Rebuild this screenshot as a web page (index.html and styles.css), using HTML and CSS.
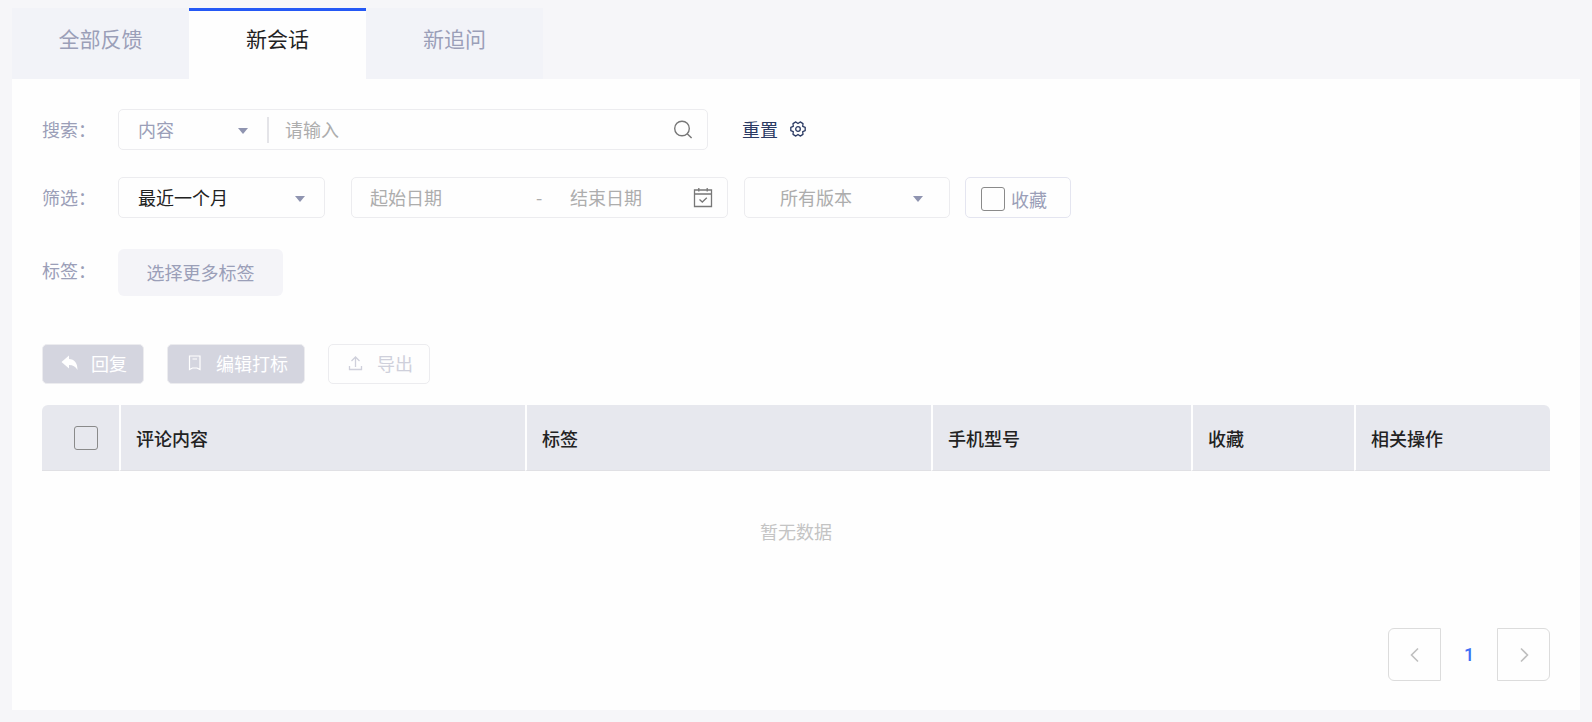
FILE: index.html
```html
<!DOCTYPE html>
<html lang="zh-CN">
<head>
    <meta charset="UTF-8">
    <meta name="viewport" content="width=device-width, initial-scale=1.0">
    <title>用户反馈</title>
    <link rel="stylesheet" href="styles.css">
</head>
<body>
    <nav class="tabs">
        <a href="#" class="tab">全部反馈</a>
        <a href="#" class="tab active">新会话</a>
        <a href="#" class="tab">新追问</a>
    </nav>

    <main class="panel">
        <!-- Search -->
        <form class="row">
            <label class="row-label" for="keyword">搜索：</label>
            <div class="box search-box">
                <div class="select-wrap search-type">
                    <select aria-label="搜索类型">
                        <option>内容</option>
                    </select>
                </div>
                <input type="text" id="keyword" class="keyword" placeholder="请输入">
                <button type="button" class="icon-button" aria-label="搜索">
                    <svg width="20" height="20" viewBox="0 0 20 20" fill="none" stroke="#777" stroke-width="1.4">
                        <circle cx="9" cy="8.5" r="7.3"/>
                        <path d="M14.2 13.7L18.6 18.1"/>
                    </svg>
                </button>
            </div>
            <button type="reset" class="reset">重置</button>
            <button type="button" class="icon-button settings" aria-label="设置">
                <svg width="16" height="16" viewBox="0 0 16 16" fill="none" stroke="#2b3a63" stroke-width="1.3" stroke-linejoin="round">
                    <path d="M15.2 6.3V9.7L12.7 10.7L13 13.4L10.2 15.1L8 13.4L5.8 15.1L3 13.4L3.3 10.7L0.8 9.7V6.3L3.3 5.3L3 2.6L5.8 0.9L8 2.6L10.2 0.9L13 2.6L12.7 5.3Z"/>
                    <circle cx="8" cy="8" r="2.3"/>
                </svg>
            </button>
        </form>

        <!-- Filters -->
        <div class="row">
            <label class="row-label" for="period">筛选：</label>
            <div class="box select-wrap period">
                <select id="period">
                    <option>最近一个月</option>
                </select>
            </div>
            <div class="box date-range">
                <input type="text" class="date-start" placeholder="起始日期" aria-label="起始日期">
                <span class="dash">-</span>
                <input type="text" class="date-end" placeholder="结束日期" aria-label="结束日期">
                <button type="button" class="icon-button" aria-label="选择日期">
                    <svg width="20" height="20" viewBox="0 0 20 20" fill="none" stroke="#777" stroke-width="1.3">
                        <path d="M1.5 2H18.5V18.5H1.5Z M1.5 6H18.5 M5.8 0V3.5 M14.2 0V3.5"/>
                        <path d="M6.5 11.5L9.3 14L13.8 9.7"/>
                    </svg>
                </button>
            </div>
            <div class="box select-wrap version">
                <select aria-label="版本">
                    <option>所有版本</option>
                </select>
            </div>
            <label class="box favorite">
                <input type="checkbox" class="check">
                收藏
            </label>
        </div>

        <!-- Tags -->
        <div class="row tag-row">
            <span class="row-label">标签：</span>
            <button type="button" class="more-tags">选择更多标签</button>
        </div>

        <div class="actions">
            <button type="button" class="action filled" disabled>
                <svg width="18" height="18" viewBox="0 0 18 18" fill="#fff">
                    <path d="M0.5 8L8 1.5V5C13.5 5.2 16.5 9 16.5 16C14.5 12.5 12 11 8 11V14.5Z"/>
                </svg>
                回复
            </button>
            <button type="button" class="action filled" disabled>
                <svg width="18" height="18" viewBox="0 0 18 18" fill="none" stroke="#fff" stroke-width="1.2">
                    <path d="M3.5 2H14V15.5L11 14H6.5L3.5 15.5Z M6.5 5H11"/>
                </svg>
                编辑打标
            </button>
            <button type="button" class="action" disabled>
                <svg width="18" height="18" viewBox="0 0 18 18" fill="none" stroke="#cfd0db" stroke-width="1.3">
                    <path d="M8.5 13V3 M4.5 7L8.5 3L12.5 7 M2.5 12V15.5H14.5V12"/>
                </svg>
                导出
            </button>
        </div>

        <table class="comments">
            <thead>
                <tr>
                    <th class="col-check"><input type="checkbox" class="check" aria-label="全选"></th>
                    <th>评论内容</th>
                    <th>标签</th>
                    <th class="col-model">手机型号</th>
                    <th class="col-favorite">收藏</th>
                    <th class="col-operation">相关操作</th>
                </tr>
            </thead>
            <tbody>
                <tr>
                    <td colspan="6" class="empty">暂无数据</td>
                </tr>
            </tbody>
        </table>

        <nav class="pagination" aria-label="分页">
            <button type="button" class="page-button prev" aria-label="上一页">
                <svg width="16" height="16" viewBox="0 0 16 16" fill="none" stroke="#bfbfbf" stroke-width="1.6">
                    <path d="M11 1.5L4.5 8L11 14.5"/>
                </svg>
            </button>
            <a href="#" class="page-current">1</a>
            <button type="button" class="page-button next" aria-label="下一页">
                <svg width="16" height="16" viewBox="0 0 16 16" fill="none" stroke="#bfbfbf" stroke-width="1.6">
                    <path d="M5 1.5L11.5 8L5 14.5"/>
                </svg>
            </button>
        </nav>
    </main>
</body>
</html>
```

FILE: styles.css
```css
* {
    box-sizing: border-box;
}

body {
    margin: 0;
    padding: 8px 12px 12px;
    background-color: #f6f6f9;
    font-family: "Noto Sans CJK SC", sans-serif;
    font-size: 18px;
    line-height: 24px;
    color: #9b9fb8;
}

a {
    text-decoration: none;
}

button,
input,
select {
    margin: 0;
    padding: 0;
    border: none;
    background: none;
    font: inherit;
    color: inherit;
}

svg {
    display: block;
    flex-shrink: 0;
}

.tabs {
    display: flex;
}

.tab {
    width: 177px;
    height: 71px;
    padding-top: 15px;
    border-top: 3px solid #f2f3f8;
    background-color: #f2f3f8;
    font-size: 21px;
    text-align: center;
    color: #9b9fb8;
}

.tab.active {
    border-top-color: #2458f5;
    background-color: #fefefe;
    color: #222;
}

.panel {
    padding: 30px 30px 29px;
    background-color: #fefefe;
}

.row {
    display: flex;
    align-items: center;
    margin-bottom: 27px;
}

.row-label {
    width: 76px;
    padding-bottom: 2px;
}

.box {
    display: flex;
    align-items: center;
    height: 41px;
    border: 1px solid #ececef;
    border-radius: 5px;
}

.box input::placeholder {
    color: #adadad;
    opacity: 1;
}

.box input[type="text"],
.dash {
    padding-bottom: 2px;
}

.search-box {
    width: 590px;
    padding-right: 14px;
}

.select-wrap {
    position: relative;
}

.select-wrap select {
    width: 100%;
    height: 100%;
    padding: 0 0 2px 19px;
    appearance: none;
}

/* drop-down arrow */
.select-wrap::after {
    content: "";
    position: absolute;
    right: 19px;
    top: 50%;
    margin-top: -2px;
    border-top: 6px solid #8f94b0;
    border-left: 5px solid transparent;
    border-right: 5px solid transparent;
    pointer-events: none;
}

.search-type {
    width: 150px;
    height: 26px;
    border-right: 2px solid #e4e4e8;
}

.keyword {
    flex: 1;
    min-width: 0;
    padding-left: 16px;
}

.icon-button {
    cursor: pointer;
}

.reset,
.settings {
    padding-bottom: 2px;
}

.reset {
    margin: 0 12px 0 34px;
    color: #2b3a63;
    cursor: pointer;
}

.period {
    width: 207px;
    margin-right: 26px;
    color: #222;
}

.date-range {
    width: 377px;
    margin-right: 16px;
    padding: 0 14px 0 18px;
}

.date-start {
    width: 166px;
}

.dash {
    width: 34px;
    color: #adadad;
}

.date-end {
    flex: 1;
    min-width: 0;
}

.version {
    width: 206px;
    margin-right: 15px;
    color: #adadad;
}

.version select {
    padding-left: 35px;
}

.version::after {
    right: 26px;
}

.favorite {
    width: 106px;
    padding-left: 15px;
    padding-top: 2px;
    gap: 6px;
    border-color: #e4e5f0;
}

.check {
    width: 24px;
    height: 24px;
    border: 1px solid #8a8a8a;
    border-radius: 3px;
    appearance: none;
}

.tag-row {
    margin: 31px 0 48px;
}

.tag-row .row-label {
    padding-bottom: 6px;
}

.more-tags {
    width: 165px;
    height: 47px;
    padding-bottom: 2px;
    border-radius: 6px;
    background-color: #f4f4f8;
    cursor: pointer;
}

.actions {
    display: flex;
    gap: 23px;
    margin-bottom: 21px;
}

.action {
    display: flex;
    align-items: center;
    gap: 12px;
    height: 40px;
    padding: 0 16px 2px 18px;
    border: 1px solid #ececef;
    border-radius: 5px;
    color: #cfd0db;
}

.action.filled {
    background-color: #d4d5df;
    color: #fff;
}

.comments {
    width: 100%;
    table-layout: fixed;
    border-collapse: separate;
    border-spacing: 0;
}

.comments th {
    height: 66px;
    padding: 0 0 0 15px;
    border-left: 2px solid #fefefe;
    border-bottom: 1px solid #e0e0e4;
    background-color: #e7e8ee;
    font-weight: 500;
    text-align: left;
    color: #222;
}

.comments th:first-child {
    padding: 0 0 0 32px;
    border-left: none;
    border-top-left-radius: 6px;
}

.comments th:last-child {
    border-top-right-radius: 6px;
}

.comments .check {
    display: block;
}

.col-check {
    width: 77px;
}

.col-model {
    width: 260px;
}

.col-favorite {
    width: 163px;
}

.col-operation {
    width: 196px;
}

.empty {
    height: 122px;
    padding: 0 0 2px;
    text-align: center;
    color: #c4c4c4;
}

.pagination {
    display: flex;
    justify-content: flex-end;
    margin-top: 35px;
}

.page-button {
    display: flex;
    align-items: center;
    justify-content: center;
    width: 53px;
    height: 53px;
    border: 1px solid #dcdcdc;
    cursor: pointer;
}

.prev {
    border-radius: 6px 0 0 6px;
}

.next {
    border-radius: 0 6px 6px 0;
}

.page-current {
    width: 56px;
    font-family: Roboto, sans-serif;
    font-weight: 500;
    line-height: 53px;
    text-align: center;
    color: #3f6ff5;
}
```
